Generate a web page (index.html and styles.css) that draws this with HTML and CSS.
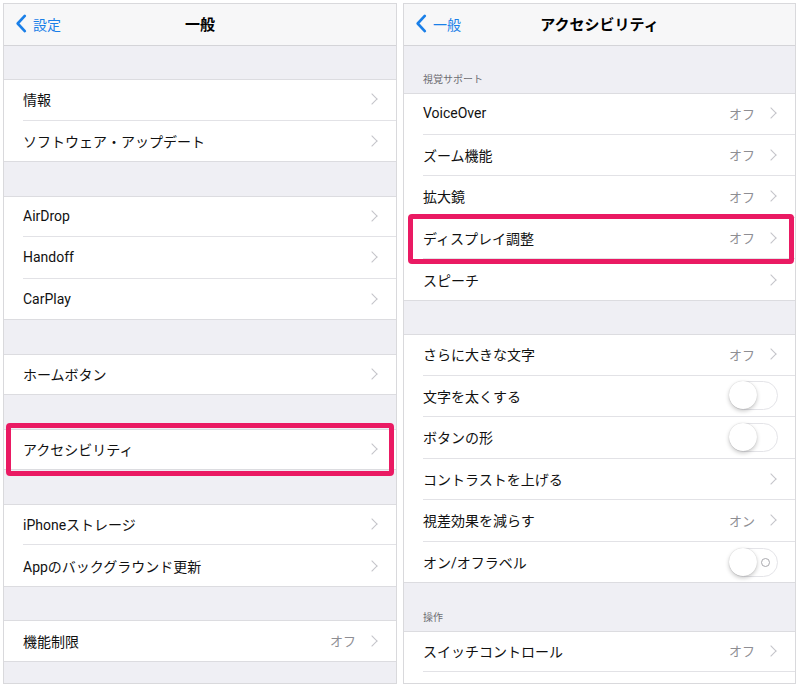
FILE: index.html
```html
<!DOCTYPE html>
<html lang="ja">
<head>
<meta charset="utf-8">
<link rel="stylesheet" href="styles.css">
</head>
<body>
<div class="page">
  <section class="panel panel-left">
    <header class="nav">
      <div class="back">
        <svg class="back-chev" viewBox="0 0 12 20" width="12" height="19"><path d="M10 2 L2.5 10 L10 18" fill="none" stroke="#1a7fe8" stroke-width="2.8" stroke-linecap="round" stroke-linejoin="round"/></svg>
        <span>設定</span>
      </div>
      <div class="title">一般</div>
      <div></div>
    </header>

    <div class="gap"></div>
    <div class="group">
      <div class="row"><div class="row-inner"><span class="label">情報</span><span class="acc"><i class="chev"></i></span></div></div>
      <div class="row"><div class="row-inner"><span class="label">ソフトウェア・アップデート</span><span class="acc"><i class="chev"></i></span></div></div>
    </div>
    <div class="gap"></div>
    <div class="group">
      <div class="row"><div class="row-inner"><span class="label">AirDrop</span><span class="acc"><i class="chev"></i></span></div></div>
      <div class="row"><div class="row-inner"><span class="label">Handoff</span><span class="acc"><i class="chev"></i></span></div></div>
      <div class="row"><div class="row-inner"><span class="label">CarPlay</span><span class="acc"><i class="chev"></i></span></div></div>
    </div>
    <div class="gap"></div>
    <div class="group">
      <div class="row"><div class="row-inner"><span class="label">ホームボタン</span><span class="acc"><i class="chev"></i></span></div></div>
    </div>
    <div class="gap"></div>
    <div class="group">
      <div class="row hl hl-left"><div class="row-inner"><span class="label">アクセシビリティ</span><span class="acc"><i class="chev"></i></span></div></div>
    </div>
    <div class="gap"></div>
    <div class="group">
      <div class="row"><div class="row-inner"><span class="label">iPhoneストレージ</span><span class="acc"><i class="chev"></i></span></div></div>
      <div class="row"><div class="row-inner"><span class="label">Appのバックグラウンド更新</span><span class="acc"><i class="chev"></i></span></div></div>
    </div>
    <div class="gap"></div>
    <div class="group">
      <div class="row"><div class="row-inner"><span class="label">機能制限</span><span class="acc"><span class="value">オフ</span><i class="chev"></i></span></div></div>
    </div>
  </section>

  <section class="panel panel-right">
    <header class="nav">
      <div class="back">
        <svg class="back-chev" viewBox="0 0 12 20" width="12" height="19"><path d="M10 2 L2.5 10 L10 18" fill="none" stroke="#1a7fe8" stroke-width="2.8" stroke-linecap="round" stroke-linejoin="round"/></svg>
        <span>一般</span>
      </div>
      <div class="title">アクセシビリティ</div>
      <div></div>
    </header>

    <div class="header-gap"><span>視覚サポート</span></div>
    <div class="group">
      <div class="row"><div class="row-inner"><span class="label">VoiceOver</span><span class="acc"><span class="value">オフ</span><i class="chev"></i></span></div></div>
      <div class="row"><div class="row-inner"><span class="label">ズーム機能</span><span class="acc"><span class="value">オフ</span><i class="chev"></i></span></div></div>
      <div class="row"><div class="row-inner"><span class="label">拡大鏡</span><span class="acc"><span class="value">オフ</span><i class="chev"></i></span></div></div>
      <div class="row hl hl-right"><div class="row-inner"><span class="label">ディスプレイ調整</span><span class="acc"><span class="value">オフ</span><i class="chev"></i></span></div></div>
      <div class="row"><div class="row-inner"><span class="label">スピーチ</span><span class="acc"><i class="chev"></i></span></div></div>
    </div>
    <div class="gap"></div>
    <div class="group">
      <div class="row"><div class="row-inner"><span class="label">さらに大きな文字</span><span class="acc"><span class="value">オフ</span><i class="chev"></i></span></div></div>
      <div class="row"><div class="row-inner"><span class="label">文字を太くする</span><span class="acc"><span class="toggle"><span class="knob"></span></span></span></div></div>
      <div class="row"><div class="row-inner"><span class="label">ボタンの形</span><span class="acc"><span class="toggle"><span class="knob"></span></span></span></div></div>
      <div class="row"><div class="row-inner"><span class="label">コントラストを上げる</span><span class="acc"><i class="chev"></i></span></div></div>
      <div class="row"><div class="row-inner"><span class="label">視差効果を減らす</span><span class="acc"><span class="value">オン</span><i class="chev"></i></span></div></div>
      <div class="row"><div class="row-inner"><span class="label">オン/オフラベル</span><span class="acc"><span class="toggle labeled"><span class="knob"></span><span class="o-mark"></span></span></span></div></div>
    </div>
    <div class="header-gap"><span>操作</span></div>
    <div class="group group-open">
      <div class="row"><div class="row-inner"><span class="label">スイッチコントロール</span><span class="acc"><span class="value">オフ</span><i class="chev"></i></span></div></div>
      <div class="row"><div class="row-inner"></div></div>
    </div>
  </section>
</div>
</body>
</html>
```

FILE: styles.css
```css
* { box-sizing: border-box; }
html, body { margin: 0; padding: 0; background: #fff; }
body {
  font-family: Roboto, "Noto Sans CJK JP", sans-serif;
  color: #111;
  width: 800px;
  height: 686px;
  overflow: hidden;
}
.page {
  display: flex;
  gap: 6px;
  padding: 3px 4px 0 3px;
}
.panel {
  border: 1px solid #d9d9dc;
  height: 681px;
  background: #efeff4;
  overflow: hidden;
  display: flex;
  flex-direction: column;
}
.panel-left { width: 394px; }
.panel-right { width: 393px; }

.nav {
  height: 41.5px;
  flex: none;
  background: #f7f7f8;
  border-bottom: 1px solid #d4d4d8;
  display: grid;
  grid-template-columns: 1fr auto 1fr;
  align-items: center;
  padding-bottom: 1px;
}
.back {
  display: flex;
  align-items: center;
  gap: 6px;
  padding-left: 11px;
  color: #1a7fe8;
  font-size: 14px;
  font-family: "Noto Sans CJK JP", sans-serif;
}
.back-chev { display: block; }
.title {
  font-family: "Noto Sans CJK JP", sans-serif;
  font-weight: 700;
  font-size: 15px;
  color: #000;
}

.gap { height: 33.5px; flex: none; }
.header-gap {
  height: 47.5px;
  flex: none;
  display: flex;
  align-items: flex-end;
  padding: 0 0 7px 19px;
  font-family: "Noto Sans CJK JP", sans-serif;
  font-size: 10px;
  color: #6d6d72;
}

.group {
  background: #fff;
  box-shadow: inset 0 1px 0 #dcdce0, inset 0 -1px 0 #dcdce0;
  flex: none;
}
.group-open { box-shadow: inset 0 1px 0 #dcdce0; }
.row {
  height: 41.5px;
  padding-left: 19px;
  position: relative;
}
.row-inner {
  height: 100%;
  display: flex;
  align-items: center;
  justify-content: space-between;
  padding-right: 17px;
  border-bottom: 1px solid #e2e2e6;
}
.row:last-child .row-inner { border-bottom: none; }

.label { font-size: 14px; letter-spacing: 0; }
.acc { display: flex; align-items: center; gap: 12px; }
.value {
  font-family: "Noto Sans CJK JP", sans-serif;
  font-size: 13px;
  color: #8e8e93;
}
.chev {
  display: block;
  width: 8px;
  height: 8px;
  border-right: 1.6px solid #c4c4c9;
  border-top: 1.6px solid #c4c4c9;
  transform: rotate(45deg);
  margin-right: 3px;
}

.toggle {
  display: block;
  position: relative;
  width: 49px;
  height: 29px;
  border-radius: 15px;
  border: 1.5px solid #e4e4e8;
  background: #fff;
}
.knob {
  position: absolute;
  left: -1px;
  top: -1px;
  width: 28px;
  height: 28px;
  border-radius: 50%;
  background: #fff;
  box-shadow: 0 2px 4px rgba(0,0,0,0.22), 0 0 1px rgba(0,0,0,0.2);
}
.o-mark {
  position: absolute;
  right: 7px;
  top: 9px;
  width: 9px;
  height: 9px;
  border-radius: 50%;
  border: 1.3px solid #a9a9ae;
}

.hl::after {
  content: "";
  position: absolute;
  border: 5px solid #ea1a63;
  border-radius: 4px;
  pointer-events: none;
}
.hl-left::after { top: -6px; bottom: -6px; left: 2px; right: 2px; }
.hl-right::after { top: -4px; bottom: -5px; left: 4px; right: 1px; }
```
